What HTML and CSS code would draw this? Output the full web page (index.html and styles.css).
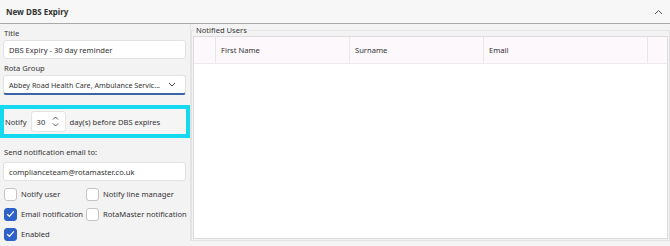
FILE: index.html
```html
<!DOCTYPE html>
<html>
<head>
<meta charset="utf-8">
<link rel="stylesheet" href="styles.css">
</head>
<body>
<div class="header">
  <span class="header-title">New DBS Expiry</span>
  <svg class="collapse" width="9" height="6" viewBox="0 0 9 6"><path d="M1 5 L4.5 1.5 L8 5" fill="none" stroke="#555" stroke-width="1"/></svg>
</div>
<div class="main">
  <div class="left">
    <div class="label first">Title</div>
    <div class="input">DBS Expiry - 30 day reminder</div>
    <div class="label">Rota Group</div>
    <div class="input select">
      <span class="sel-text">Abbey Road Health Care, Ambulance Servic...</span>
      <svg width="8" height="5" viewBox="0 0 8 5"><path d="M1 1 L4 4 L7 1" fill="none" stroke="#444" stroke-width="1"/></svg>
    </div>
    <div class="notify-box">
      <span>Notify</span>
      <div class="spinner">
        <span>30</span>
        <svg width="7" height="13" viewBox="0 0 7 13"><path d="M1 4.5 L3.5 2 L6 4.5 M1 8.5 L3.5 11 L6 8.5" fill="none" stroke="#555" stroke-width="1"/></svg>
      </div>
      <span>day(s) before DBS expires</span>
    </div>
    <div class="label send">Send notification email to:</div>
    <div class="input">complianceteam@rotamaster.co.uk</div>
    <div class="checks">
      <div class="check"><span class="box"></span><span>Notify user</span></div>
      <div class="check"><span class="box"></span><span>Notify line manager</span></div>
      <div class="check"><span class="box on"><svg width="9" height="8" viewBox="0 0 9 8"><path d="M1.2 4.2 L3.4 6.4 L7.8 1.4" fill="none" stroke="#fff" stroke-width="1.3"/></svg></span><span>Email notification</span></div>
      <div class="check"><span class="box"></span><span>RotaMaster notification</span></div>
      <div class="check"><span class="box on"><svg width="9" height="8" viewBox="0 0 9 8"><path d="M1.2 4.2 L3.4 6.4 L7.8 1.4" fill="none" stroke="#fff" stroke-width="1.3"/></svg></span><span>Enabled</span></div>
    </div>
  </div>
  <fieldset class="right">
    <legend>Notified Users</legend>
    <div class="table">
      <div class="thead">
        <div class="th c0"></div>
        <div class="th c1">First Name</div>
        <div class="th c2">Surname</div>
        <div class="th c3">Email</div>
        <div class="th c4"></div>
      </div>
      <div class="tbody"></div>
    </div>
  </fieldset>
</div>
</body>
</html>
```
FILE: styles.css
```css
* { box-sizing: border-box; }
html, body { margin: 0; padding: 0; }
body {
  width: 670px;
  height: 246px;
  overflow: hidden;
  background: #f3f3f3;
  font-family: "Noto Sans", "Open Sans", sans-serif;
  font-size: 7.6px;
  color: #333;
}
.header {
  height: 24px;
  background: #f7f7f7;
  border-bottom: 1px solid #a9a9a9;
  display: flex;
  align-items: center;
  justify-content: space-between;
  padding: 0 7px 0 6px;
}
.header-title {
  font-weight: bold;
  font-size: 8px;
  color: #333;
}
.main {
  display: flex;
  height: 217px;
}
.left {
  width: 191px;
  padding: 3px 4px 0 3px;
  border-right: 1px solid #e4e4e4;
  background: #f3f3f3;
  white-space: nowrap;
}
.label {
  height: 12px;
  line-height: 12px;
  margin-top: 3px;
  padding-left: 1px;
}
.label.first { margin-top: 0; }
.input {
  height: 19px;
  margin-top: 1px;
  background: #fff;
  border: 1px solid #e2e2e2;
  border-radius: 3px;
  padding: 0 5px;
  display: flex;
  align-items: center;
  white-space: nowrap;
  overflow: hidden;
}
.select {
  height: 20px;
  border-bottom: 2px solid #3b63a8;
  justify-content: space-between;
  margin-top: 1px;
}
.sel-text {
  flex: 1;
  min-width: 0;
  font-size: 7.2px;
}
.select svg { margin: 0 4px 0 6px; flex: none; }
.notify-box {
  margin: 10px -4px 0 -3px;
  height: 33px;
  border: 4px solid #14d9f1;
  display: flex;
  align-items: center;
  padding-left: 1px;
  background: #f5f5f5;
}
.spinner {
  width: 35px;
  height: 21px;
  margin: 0 4px 0 4px;
  background: #fff;
  border: 1px solid #e4e4e4;
  border-radius: 3px;
  display: flex;
  align-items: center;
  justify-content: space-between;
  padding: 0 6px 0 5px;
}
.label.send { margin-top: 8px; }
.send + .input { margin-top: 4px; }
.checks {
  margin-top: 3px;
  display: grid;
  grid-template-columns: 82px auto;
  grid-auto-rows: 20px;
}
.check {
  display: flex;
  align-items: center;
  padding-left: 1px;
  white-space: nowrap;
}
.box {
  width: 13px;
  height: 13px;
  border: 1px solid #c4c4c4;
  border-radius: 3px;
  background: #fff;
  margin-right: 4px;
  display: flex;
  align-items: center;
  justify-content: center;
  flex: none;
}
.box.on {
  background: #2f62c9;
  border-color: #2f62c9;
}
.right {
  flex: 1;
  margin: 0;
  padding: 0 1px 1px 1px;
  border: 1px solid #e2e2e2;
  border-top-color: #e6e6e6;
  min-width: 0;
}
.right legend {
  padding: 0 1px;
  margin-left: 2px;
  line-height: 12px;
  color: #333;
}
.table {
  border: 1px solid #dcdcdc;
  height: 203px;
  background: #fff;
  display: flex;
  flex-direction: column;
}
.thead {
  display: flex;
  height: 27px;
  background: #fcf8fc;
  border-bottom: 1px solid #ececec;
}
.th {
  border-right: 1px solid #e8e8e8;
  display: flex;
  align-items: center;
  padding-left: 5px;
}
.c0 { width: 22px; }
.c1 { width: 134px; }
.c2 { width: 134px; }
.c3 { width: 164px; }
.c4 { flex: 1; border-right: none; }
.tbody { flex: 1; }
```
